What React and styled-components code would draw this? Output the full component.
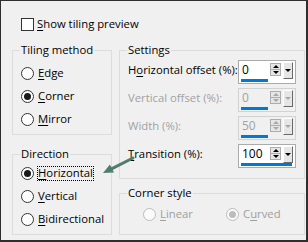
import React from 'react';
import styled, { createGlobalStyle } from 'styled-components';

const GlobalStyle = createGlobalStyle`
  body {
    margin: 0;
    font-family: "Segoe UI", "Open Sans", sans-serif;
    font-size: 11.3px;
  }
`;

const settings = [
  { id: 'h', label: <>H<Key>o</Key>rizontal offset (%):</>, value: '0', fill: 53 },
  { id: 'v', label: 'Vertical offset (%):', value: '0', fill: 53, disabled: true },
  { id: 'w', label: 'Width (%):', value: '50', fill: 53, disabled: true },
  { id: 't', label: <><Key>T</Key>ransition (%):</>, value: '100', fill: 100 },
];

function Key({ children }) {
  return <Under>{children}</Under>;
}

const Radio = ({ checked, disabled, focused, children }) => (
  <RadioRow>
    <RadioCircle $disabled={disabled}>{checked && <RadioDot $disabled={disabled} />}</RadioCircle>
    <OptionLabel $disabled={disabled} $focused={focused}>{children}</OptionLabel>
  </RadioRow>
);

const Spinner = ({ value, fill, disabled }) => (
  <SpinBox $disabled={disabled}>
    <SpinTop>
      <SpinValue $disabled={disabled}>{value}</SpinValue>
      <SpinPair>
        <SpinBtn><Tri $up $disabled={disabled} /></SpinBtn>
        <SpinBtn><Tri $disabled={disabled} /></SpinBtn>
      </SpinPair>
      <DropBtn><Tri $disabled={disabled} /></DropBtn>
    </SpinTop>
    <BarTrack>
      <BarFill style={{ width: `${fill}%` }} />
    </BarTrack>
  </SpinBox>
);

const App = () => {
  return (
    <>
      <GlobalStyle />
      <Dialog>
        <TopRow>
          <CheckBox />
          <span><Key>S</Key>how tiling preview</span>
        </TopRow>
        <Columns>
          <Column $gap={11}>
            <GroupBox $h={93} $pt={4}>
              <Caption>Tiling method</Caption>
              <Radio><Key>E</Key>dge</Radio>
              <Radio checked><Key>C</Key>orner</Radio>
              <Radio><Key>M</Key>irror</Radio>
            </GroupBox>
            <GroupBox $h={89} $pt={0}>
              <Caption>Direction</Caption>
              <Radio checked focused><Key>H</Key>orizontal</Radio>
              <Radio><Key>V</Key>ertical</Radio>
              <Radio><Key>B</Key>idirectional</Radio>
            </GroupBox>
          </Column>
          <Column $gap={6}>
            <GroupBox $h={137} $pt={2}>
              <Caption>Settings</Caption>
              <SettingsList>
                {settings.map((s) => (
                  <SettingRow key={s.id}>
                    <FieldLabel $disabled={s.disabled}>{s.label}</FieldLabel>
                    <Spinner value={s.value} fill={s.fill} disabled={s.disabled} />
                  </SettingRow>
                ))}
              </SettingsList>
            </GroupBox>
            <GroupBox $h={50} $pt={5} $pl={23}>
              <Caption $ml={-16}>Corner style</Caption>
              <CornerRow>
                <Radio disabled><Key>L</Key>inear</Radio>
                <Radio disabled checked>C<Key>u</Key>rved</Radio>
              </CornerRow>
            </GroupBox>
          </Column>
        </Columns>

        {/* annotation arrow pointing at the focused option */}
        <Pointer width="36" height="24" viewBox="0 0 36 24">
          <line x1="33" y1="4" x2="11.5" y2="14.8" stroke="#4f7d6f" strokeWidth="3" strokeLinecap="round" />
          <polygon points="3,19 14,18.6 9.9,10.4" fill="#4f7d6f" />
        </Pointer>
      </Dialog>
    </>
  );
};

const Dialog = styled.div`
  position: relative;
  width: 308px;
  height: 242px;
  box-sizing: border-box;
  border-style: solid;
  border-color: #2e2e2e;
  border-width: 1px 2px 2px 1px;
  background: #f0f0f0;
  color: #000;
  overflow: hidden;
`;

const TopRow = styled.div`
  display: flex;
  align-items: center;
  gap: 3px;
  height: 16px;
  margin: 15px 0 0 20px;
  line-height: 16px;
`;

const CheckBox = styled.div`
  width: 13px;
  height: 13px;
  box-sizing: border-box;
  border: 1px solid #333;
  background: #fff;
`;

const Under = styled.span`
  text-decoration: underline;
  text-underline-offset: 2px;
`;

const Columns = styled.div`
  display: grid;
  grid-template-columns: 100px 186px;
  column-gap: 7px;
  margin: 10px 0 0 11px;
`;

const Column = styled.div`
  display: flex;
  flex-direction: column;
  gap: ${(p) => p.$gap}px;
`;

const GroupBox = styled.fieldset`
  margin: 0;
  min-width: 0;
  box-sizing: border-box;
  height: ${(p) => p.$h}px;
  border: 1px solid #dcdcdc;
  padding: ${(p) => p.$pt}px 8px 0 ${(p) => p.$pl || 8}px;
`;

const Caption = styled.legend`
  padding: 0 1px;
  margin-left: ${(p) => (p.$ml != null ? p.$ml : -1)}px;
  line-height: 16px;
  font-size: 11.3px;
`;

const RadioRow = styled.div`
  display: flex;
  align-items: center;
  gap: 3px;
  height: 23px;
`;

const RadioCircle = styled.div`
  width: 13px;
  height: 13px;
  box-sizing: border-box;
  border-radius: 50%;
  border: 1px solid ${(p) => (p.$disabled ? '#bcbcbc' : '#333')};
  background: ${(p) => (p.$disabled ? '#fbfbfb' : '#fff')};
  display: flex;
  align-items: center;
  justify-content: center;
  flex-shrink: 0;
`;

const RadioDot = styled.div`
  width: 7px;
  height: 7px;
  border-radius: 50%;
  background: ${(p) => (p.$disabled ? '#bcbcbc' : '#1a1a1a')};
`;

const OptionLabel = styled.span`
  border: 1px ${(p) => (p.$focused ? 'dotted #000' : 'solid transparent')};
  line-height: 12px;
  padding-bottom: 1px;
  color: ${(p) => (p.$disabled ? '#9e9e9e' : '#000')};
  white-space: nowrap;
`;

const SettingsList = styled.div`
  display: flex;
  flex-direction: column;
  gap: 4px;
`;

const SettingRow = styled.div`
  display: flex;
  justify-content: space-between;
  align-items: flex-start;
`;

const FieldLabel = styled.span`
  padding-top: 2px;
  line-height: 16px;
  white-space: nowrap;
  color: ${(p) => (p.$disabled ? '#a2a2a2' : '#000')};
`;

const SpinBox = styled.div`
  width: 58px;
  height: 24px;
  box-sizing: border-box;
  border: 1px solid ${(p) => (p.$disabled ? '#d2d2d2' : '#ababab')};
  background: ${(p) => (p.$disabled ? '#f0f0f0' : '#fff')};
  display: flex;
  flex-direction: column;
`;

const SpinTop = styled.div`
  display: flex;
  align-items: center;
  height: 17px;
`;

const SpinValue = styled.span`
  flex: 1;
  padding-left: 3px;
  line-height: 17px;
  font-size: 12px;
  color: ${(p) => (p.$disabled ? '#a2a2a2' : '#000')};
`;

const SpinPair = styled.div`
  display: flex;
  flex-direction: column;
  width: 11px;
  margin-right: 2px;
`;

const SpinBtn = styled.div`
  height: 7px;
  box-sizing: border-box;
  border: 1px solid #adadad;
  background: #e6e6e6;
  display: flex;
  align-items: center;
  justify-content: center;
  & + & {
    border-top: none;
    height: 6px;
  }
`;

const Tri = styled.div`
  width: 0;
  height: 0;
  border-left: 3px solid transparent;
  border-right: 3px solid transparent;
  ${(p) => (p.$up ? 'border-bottom' : 'border-top')}: 3px solid ${(p) => (p.$disabled ? '#a8a8a8' : '#000')};
`;

const DropBtn = styled.div`
  align-self: flex-start;
  margin: 1px 2px 0 0;
  width: 10px;
  height: 17px;
  box-sizing: border-box;
  border-style: solid;
  border-width: 1px;
  border-color: #fff #696969 #696969 #fff;
  background: #e6e6e6;
  display: flex;
  align-items: center;
  justify-content: center;
`;

const BarTrack = styled.div`
  margin: 1px 0 0 2px;
  width: 51px;
  height: 3px;
`;

const BarFill = styled.div`
  height: 100%;
  background: #0078d7;
`;

const CornerRow = styled.div`
  display: grid;
  grid-template-columns: 83px auto;
  & > div {
    height: 16px;
  }
`;

const Pointer = styled.svg`
  position: absolute;
  left: 99px;
  top: 153px;
`;

export default App;
